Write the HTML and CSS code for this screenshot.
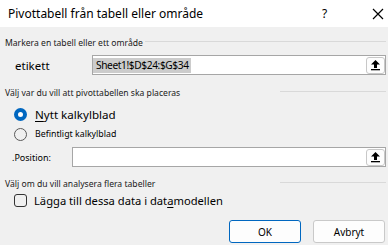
FILE: index.html
```html
<!DOCTYPE html>
<html>
<head>
<meta charset="utf-8">
<link rel="stylesheet" href="styles.css">
</head>
<body>
<div class="dialog">
  <div class="titlebar">
    <span class="title">Pivottabell från tabell eller område</span>
    <div class="title-actions">
      <span class="help">?</span>
      <svg class="dismiss" width="12" height="12" viewBox="0 0 12 12"><path d="M1 1 L11 11 M11 1 L1 11" stroke="#000000" stroke-width="1.2" fill="none"/></svg>
    </div>
  </div>

  <div class="section-head s1">
    <span class="section-label">Markera en tabell eller ett område</span>
    <span class="rule"></span>
  </div>
  <div class="field-row r1">
    <span class="field-label lbl-etikett">etikett</span>
    <div class="input">
      <span class="input-text"><span class="sel">Sheet1!$D$24:$G$34</span></span>
      <span class="collapse-btn">
        <svg width="11" height="12" viewBox="0 0 11 12"><path d="M5.5 1 L10 5.5 L7 5.5 L7 9 L4 9 L4 5.5 L1 5.5 Z" fill="#000"/><rect x="1" y="10" width="9" height="1.3" fill="#000"/></svg>
      </span>
    </div>
  </div>

  <div class="section-head s2">
    <span class="section-label">Välj var du vill att pivottabellen ska placeras</span>
    <span class="rule rule-fixed"></span>
  </div>
  <div class="option-row o1">
    <span class="radio checked"></span>
    <span class="option-big"><u>N</u>ytt kalkylblad</span>
  </div>
  <div class="option-row o2">
    <span class="radio"></span>
    <span class="option-small">Befintligt kalkylblad</span>
  </div>
  <div class="field-row r2">
    <span class="field-label lbl-pos"><span class="dot">.</span>Position:</span>
    <div class="input">
      <span class="input-text"></span>
      <span class="collapse-btn">
        <svg width="11" height="12" viewBox="0 0 11 12"><path d="M5.5 1 L10 5.5 L7 5.5 L7 9 L4 9 L4 5.5 L1 5.5 Z" fill="#000"/><rect x="1" y="10" width="9" height="1.3" fill="#000"/></svg>
      </span>
    </div>
  </div>

  <div class="section-head s3">
    <span class="section-label">Välj om du vill analysera flera tabeller</span>
    <span class="rule rule-fixed"></span>
  </div>
  <div class="option-row c1">
    <span class="checkbox"></span>
    <span class="option-big check-label">Lägga till dessa data i dat<u>a</u>modellen</span>
  </div>

  <div class="buttons">
    <button class="btn primary">OK</button>
    <button class="btn">Avbryt</button>
  </div>
</div>
</body>
</html>
```

FILE: styles.css
```css
html, body {
  margin: 0;
  padding: 0;
}
body {
  width: 388px;
  height: 245px;
  overflow: hidden;
  background: #f0f0f0;
  font-family: "Noto Sans", "DejaVu Sans", sans-serif;
  color: #000;
}
.dialog {
  display: flex;
  flex-direction: column;
  width: 388px;
  height: 245px;
}
.titlebar {
  height: 27px;
  background: #fff;
  display: flex;
  align-items: center;
  justify-content: space-between;
  padding-left: 8px;
  font-size: 12px;
  flex-shrink: 0;
}
.title-actions {
  display: flex;
  align-items: center;
  width: 66px;
  height: 27px;
  padding-right: 4px;
  box-sizing: border-box;
}
.help {
  font-size: 12px;
  width: 50px;
}
.dismiss {
  display: block;
  flex: 0 0 12px;
}

.section-head {
  display: flex;
  align-items: center;
  height: 12px;
  padding-left: 5px;
  padding-right: 2px;
  font-size: 8.6px;
  color: #1a1a1a;
}
.section-label {
  white-space: nowrap;
}
.rule {
  flex: 1;
  height: 0;
  border-top: 1px solid #d9d9d9;
  margin-left: 2px;
  margin-top: -4px;
}
.rule-fixed {
  flex: 0 0 106px;
  margin-left: auto;
}
.s1 { margin-top: 10px; }
.s2 { margin-top: 12px; }
.s3 { margin-top: 11px; }

.field-row {
  display: flex;
  align-items: center;
  padding-right: 2px;
}
.r1 { margin-top: 6px; }
.r2 { margin-top: 4px; }
.field-label {
  font-size: 11.5px;
}
.lbl-etikett {
  width: 77px;
  padding-left: 15px;
}
.lbl-pos {
  width: 59px;
  padding-left: 13px;
  font-size: 9px;
}
.dot {
  margin-left: -1px;
}
.input {
  flex: 1;
  height: 18px;
  background: #fff;
  border: 1px solid #a6a6a6;
  display: flex;
  align-items: center;
  justify-content: space-between;
}
.input-text {
  font-size: 10.2px;
  letter-spacing: -0.4px;
  display: flex;
  align-items: center;
}
.sel {
  background: #cccccc;
  line-height: 15px;
  padding: 0 2px 0 3px;
}
.collapse-btn {
  width: 19px;
  height: 17px;
  box-sizing: border-box;
  border: 1px solid #c8c8c8;
  border-radius: 3px;
  background: #fdfdfd;
  display: flex;
  align-items: center;
  justify-content: center;
}

.option-row {
  display: flex;
  align-items: center;
  height: 18px;
  padding-left: 14px;
}
.o1 { margin-top: 6px; }
.o2 { margin-top: 2px; }
.c1 { margin-top: 1px; height: 19px; }
.radio {
  width: 13px;
  height: 13px;
  box-sizing: border-box;
  border-radius: 50%;
  border: 1px solid #5a5a5a;
  margin-right: 8px;
}
.radio.checked {
  border: 4px solid #0067c0;
  background: #fff;
}
.checkbox {
  width: 13px;
  height: 13px;
  box-sizing: border-box;
  border: 1px solid #333;
  border-radius: 3px;
  margin-right: 7px;
}
.option-big {
  font-size: 11.6px;
}
.check-label {
  font-size: 11.2px;
}
.option-small {
  font-size: 8.8px;
}
.option-big u {
  text-underline-offset: 2px;
}

.buttons {
  display: flex;
  justify-content: flex-end;
  gap: 12px;
  padding-right: 3px;
  margin-top: 10px;
}
.btn {
  width: 72px;
  height: 23px;
  box-sizing: border-box;
  border: 1px solid #c9c9c9;
  border-radius: 3px;
  background: #fdfdfd;
  font-family: "Noto Sans", "DejaVu Sans", sans-serif;
  font-size: 10px;
  color: #000;
  padding: 0;
}
.btn.primary {
  border: 1px solid #0067c0;
}
```
